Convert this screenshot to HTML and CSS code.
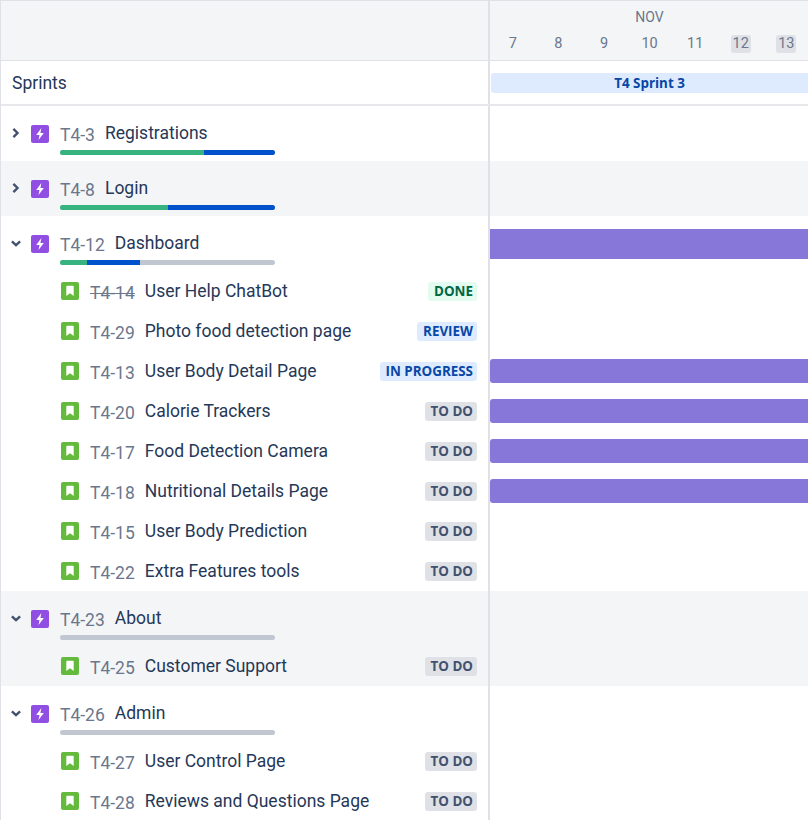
FILE: index.html
```html
<!DOCTYPE html>
<html lang="en">
<head>
<meta charset="utf-8">
<title>Roadmap</title>
<link rel="stylesheet" href="styles.css">
</head>
<body>
<svg class="defs" width="0" height="0" aria-hidden="true">
  <symbol id="epic" viewBox="0 0 18 18"><rect width="18" height="18" rx="2" fill="#904ee2"/><path d="M10.4 3 5.2 10h3.3l-1 5 5.3-7.1H9.4z" fill="#fff"/></symbol>
  <symbol id="story" viewBox="0 0 18 18"><rect width="18" height="18" rx="2" fill="#63ba3c"/><path d="M5.3 4.5c0-.4.3-.7.7-.7h6c.4 0 .7.3.7.7v9.5L9 11.3 5.3 14z" fill="#fff"/></symbol>
  <symbol id="right" viewBox="0 0 10 10"><path d="M2.4.9 6.5 5 2.4 9.1" fill="none" stroke="#42526e" stroke-width="2.4"/></symbol>
  <symbol id="down" viewBox="0 0 10 10"><path d="M.9 3.4 5 7.2 9.1 3.4" fill="none" stroke="#42526e" stroke-width="2.4"/></symbol>
</svg>
<main class="board">
  <div class="row head">
    <div class="left"></div>
    <div class="right">
      <div class="month">NOV</div>
      <div class="days">
        <span class="day">7</span><span class="day">8</span><span class="day">9</span><span class="day">10</span><span class="day">11</span><span class="day off"><b>12</b></span><span class="day off"><b>13</b></span>
      </div>
    </div>
  </div>
  <div class="row sprints">
    <div class="left">Sprints</div>
    <div class="right"><div class="sprint">T4 Sprint 3</div></div>
  </div>

  <div class="row epic">
    <div class="left">
      <svg class="chev"><use href="#right"/></svg><svg class="ico"><use href="#epic"/></svg>
      <div class="epic-body"><div class="line"><span class="key">T4-3</span><span class="name">Registrations</span></div>
      <div class="progress"><i class="g p67"></i><i class="b p33"></i></div></div>
    </div>
    <div class="right"></div>
  </div>
  <div class="row epic alt">
    <div class="left">
      <svg class="chev"><use href="#right"/></svg><svg class="ico"><use href="#epic"/></svg>
      <div class="epic-body"><div class="line"><span class="key">T4-8</span><span class="name">Login</span></div>
      <div class="progress"><i class="g p50"></i><i class="b p50"></i></div></div>
    </div>
    <div class="right"></div>
  </div>
  <div class="row epic">
    <div class="left">
      <svg class="chev"><use href="#down"/></svg><svg class="ico"><use href="#epic"/></svg>
      <div class="epic-body"><div class="line"><span class="key">T4-12</span><span class="name">Dashboard</span></div>
      <div class="progress"><i class="g p12"></i><i class="b p25"></i></div></div>
    </div>
    <div class="right"><div class="bar big"></div></div>
  </div>

  <div class="row task">
    <div class="left"><svg class="ico"><use href="#story"/></svg><span class="key struck">T4-14</span><span class="name">User Help ChatBot</span><span class="loz done">Done</span></div>
    <div class="right"></div>
  </div>
  <div class="row task">
    <div class="left"><svg class="ico"><use href="#story"/></svg><span class="key">T4-29</span><span class="name">Photo food detection page</span><span class="loz blue">Review</span></div>
    <div class="right"></div>
  </div>
  <div class="row task">
    <div class="left"><svg class="ico"><use href="#story"/></svg><span class="key">T4-13</span><span class="name">User Body Detail Page</span><span class="loz blue">In Progress</span></div>
    <div class="right"><div class="bar"></div></div>
  </div>
  <div class="row task">
    <div class="left"><svg class="ico"><use href="#story"/></svg><span class="key">T4-20</span><span class="name">Calorie Trackers</span><span class="loz">To Do</span></div>
    <div class="right"><div class="bar"></div></div>
  </div>
  <div class="row task">
    <div class="left"><svg class="ico"><use href="#story"/></svg><span class="key">T4-17</span><span class="name">Food Detection Camera</span><span class="loz">To Do</span></div>
    <div class="right"><div class="bar"></div></div>
  </div>
  <div class="row task">
    <div class="left"><svg class="ico"><use href="#story"/></svg><span class="key">T4-18</span><span class="name">Nutritional Details Page</span><span class="loz">To Do</span></div>
    <div class="right"><div class="bar"></div></div>
  </div>
  <div class="row task">
    <div class="left"><svg class="ico"><use href="#story"/></svg><span class="key">T4-15</span><span class="name">User Body Prediction</span><span class="loz">To Do</span></div>
    <div class="right"></div>
  </div>
  <div class="row task">
    <div class="left"><svg class="ico"><use href="#story"/></svg><span class="key">T4-22</span><span class="name">Extra Features tools</span><span class="loz">To Do</span></div>
    <div class="right"></div>
  </div>

  <div class="row epic alt">
    <div class="left">
      <svg class="chev"><use href="#down"/></svg><svg class="ico"><use href="#epic"/></svg>
      <div class="epic-body"><div class="line"><span class="key">T4-23</span><span class="name">About</span></div>
      <div class="progress"></div></div>
    </div>
    <div class="right"></div>
  </div>
  <div class="row task alt">
    <div class="left"><svg class="ico"><use href="#story"/></svg><span class="key">T4-25</span><span class="name">Customer Support</span><span class="loz">To Do</span></div>
    <div class="right"></div>
  </div>
  <div class="row epic">
    <div class="left">
      <svg class="chev"><use href="#down"/></svg><svg class="ico"><use href="#epic"/></svg>
      <div class="epic-body"><div class="line"><span class="key">T4-26</span><span class="name">Admin</span></div>
      <div class="progress"></div></div>
    </div>
    <div class="right"></div>
  </div>
  <div class="row task">
    <div class="left"><svg class="ico"><use href="#story"/></svg><span class="key">T4-27</span><span class="name">User Control Page</span><span class="loz">To Do</span></div>
    <div class="right"></div>
  </div>
  <div class="row task">
    <div class="left"><svg class="ico"><use href="#story"/></svg><span class="key">T4-28</span><span class="name">Reviews and Questions Page</span><span class="loz">To Do</span></div>
    <div class="right"></div>
  </div>
</main>
</body>
</html>
```
FILE: styles.css
```css
html, body {
  margin: 0;
  height: 820px;
  overflow: hidden;
  background: #fff;
}
.defs { position: absolute; }
.board {
  width: 808px;
  border-top: 1px solid #dfe1e6;
  border-left: 1px solid #dfe1e6;
  box-sizing: border-box;
  font-family: Roboto, "Open Sans", sans-serif;
  font-size: 17.5px;
  color: #172b4d;
}
.row {
  display: grid;
  grid-template-columns: 487px 1fr;
}
.left {
  display: flex;
  align-items: center;
  min-width: 0;
}
.right {
  border-left: 2px solid #dfe1e6;
  display: flex;
  align-items: center;
  overflow: hidden;
  min-width: 0;
}
.alt { background: #f4f5f7; }

.head { height: 59px; background: #f4f5f7; border-bottom: 1px solid #dfe1e6; }
.head .right { flex-direction: column; align-items: stretch; }
.month {
  text-align: center;
  font-size: 14px;
  color: #6b778c;
  line-height: 18px;
  padding-top: 7px;
  margin-left: 1px;
}
.days {
  display: grid;
  grid-template-columns: repeat(7, 45.6px);
  margin-top: 9px;
  font-size: 14.5px;
  color: #6b778c;
  line-height: 18px;
  text-align: center;
}
.day b {
  display: inline-block;
  width: 20px;
  font-weight: 400;
  background: #dfe1e6;
  border-radius: 3px;
}

.sprints { height: 43px; border-bottom: 2px solid #e6e8ec; }
.sprints .left { padding-left: 11px; color: #253858; }
.sprint {
  flex: 1;
  margin-left: 1px;
  height: 20px;
  line-height: 20px;
  background: #deebff;
  color: #0747a6;
  font-family: "Open Sans", sans-serif;
  font-size: 13.4px;
  font-weight: 700;
  text-align: center;
  border-radius: 3px 0 0 3px;
}

.epic { height: 55px; }
.epic .left { padding-left: 10px; align-items: flex-start; }
.chev { width: 10px; height: 10px; margin-top: 22px; flex: none; }
.epic .ico { margin: 19px 0 0 10px; }
.ico { width: 18px; height: 18px; flex: none; }
.epic-body { margin-left: 11px; width: 215px; padding-top: 14px; }
.line { display: flex; height: 25px; align-items: center; white-space: nowrap; }
.progress {
  display: flex;
  height: 5px;
  margin-top: 5px;
  border-radius: 3px;
  overflow: hidden;
  background: #c1c7d0;
}
.progress .g { background: #36b37e; }
.progress .b { background: #0052cc; }
.p67 { width: 67%; }
.p33 { width: 33%; }
.p50 { width: 50%; }
.p12 { width: 12.5%; }
.p25 { width: 24.5%; }

.key {
  color: #6b778c;
  position: relative;
  top: 2px;
  white-space: nowrap;
}
.name { margin-left: 10px; white-space: nowrap; color: #253858; }
.struck { text-decoration: line-through; }

.task { height: 40px; }
.task .left { padding: 0 11px 0 60px; }
.task .key { margin-left: 11px; }
.loz {
  margin-left: auto;
  margin-top: 1px;
  padding: 0 4px 0 6px;
  height: 19px;
  line-height: 19px;
  border-radius: 3px;
  font-family: "Open Sans", sans-serif;
  font-size: 13.4px;
  font-weight: 700;
  text-transform: uppercase;
  background: #dfe1e6;
  color: #42526e;
  white-space: nowrap;
}
.loz.done { background: #e3fcef; color: #006644; }
.loz.blue { background: #deebff; color: #0747a6; }

.bar {
  flex: 1;
  height: 24px;
  background: #8777d9;
  border-radius: 3px 0 0 3px;
}
.bar.big { height: 30px; border-radius: 0; margin-top: 1px; }
```
